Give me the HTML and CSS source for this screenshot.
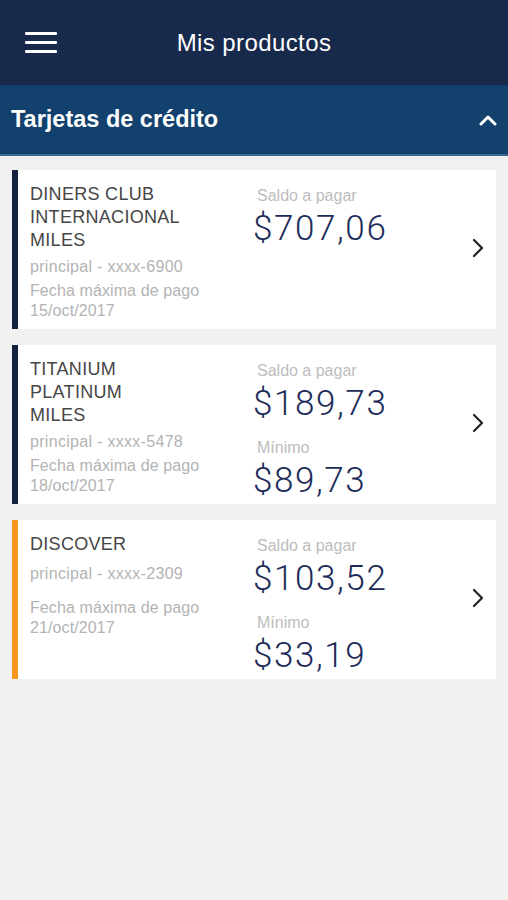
FILE: index.html
```html
<!DOCTYPE html>
<html lang="es">
<head>
  <meta charset="UTF-8" />
  <meta name="viewport" content="width=device-width, initial-scale=1.0">
  <title>Mis productos</title>
  <link rel="stylesheet" href="styles.css">
</head>
<body>
  <div class="top-bar">
    <div class="menu-btn">
      <span></span><span></span><span></span>
    </div>
    <h1>Mis productos</h1>
  </div>

  <div class="section-head">
    <h2>Tarjetas de crédito</h2>
    <svg class="chev-up" width="18" height="12" viewBox="0 0 18 12">
      <path d="M2 10 L9 3 L16 10" fill="none" stroke="#fff" stroke-width="3" stroke-linecap="round" stroke-linejoin="round"/>
    </svg>
  </div>

  <div class="card-list">
    <div class="card">
      <div class="card-info">
        <div class="card-name">DINERS CLUB<br>INTERNACIONAL<br>MILES</div>
        <div class="card-num">principal - xxxx-6900</div>
        <div class="card-date">Fecha máxima de pago<br>15/oct/2017</div>
      </div>
      <div class="card-amounts">
        <div class="label">Saldo a pagar</div>
        <div class="amount">$707,06</div>
      </div>
      <svg class="chev-right" width="14" height="20" viewBox="0 0 14 20">
        <path d="M3 2 L11 10 L3 18" fill="none" stroke="#222" stroke-width="2.2" stroke-linecap="round" stroke-linejoin="round"/>
      </svg>
    </div>

    <div class="card">
      <div class="card-info">
        <div class="card-name">TITANIUM<br>PLATINUM<br>MILES</div>
        <div class="card-num">principal - xxxx-5478</div>
        <div class="card-date">Fecha máxima de pago<br>18/oct/2017</div>
      </div>
      <div class="card-amounts">
        <div class="label">Saldo a pagar</div>
        <div class="amount">$189,73</div>
        <div class="label label-min">Mínimo</div>
        <div class="amount">$89,73</div>
      </div>
      <svg class="chev-right" width="14" height="20" viewBox="0 0 14 20">
        <path d="M3 2 L11 10 L3 18" fill="none" stroke="#222" stroke-width="2.2" stroke-linecap="round" stroke-linejoin="round"/>
      </svg>
    </div>

    <div class="card card-orange">
      <div class="card-info">
        <div class="card-name">DISCOVER</div>
        <div class="card-num spaced">principal - xxxx-2309</div>
        <div class="card-date spaced">Fecha máxima de pago<br>21/oct/2017</div>
      </div>
      <div class="card-amounts">
        <div class="label">Saldo a pagar</div>
        <div class="amount">$103,52</div>
        <div class="label label-min">Mínimo</div>
        <div class="amount">$33,19</div>
      </div>
      <svg class="chev-right" width="14" height="20" viewBox="0 0 14 20">
        <path d="M3 2 L11 10 L3 18" fill="none" stroke="#222" stroke-width="2.2" stroke-linecap="round" stroke-linejoin="round"/>
      </svg>
    </div>
  </div>
</body>
</html>
```

FILE: styles.css
```css
html, body {
  margin: 0;
  font-family: "Liberation Sans", Arial, sans-serif;
  background: #f1f1f1;
  color: #000000;
}
.top-bar {
  background-color: #182a4b;
  height: 85px;
  display: flex;
  align-items: center;
  justify-content: center;
  position: relative;
}
.top-bar h1 {
  color: #ffffff;
  font-size: 24px;
  font-weight: normal;
  letter-spacing: 0.4px;
  margin: 0;
}
.menu-btn {
  position: absolute;
  left: 25px;
  top: 32px;
  width: 32px;
  display: flex;
  flex-direction: column;
  gap: 6px;
}
.menu-btn span {
  display: block;
  height: 3px;
  background: #ffffff;
  border-radius: 1px;
}
.section-head {
  background-color: #13416d;
  height: 69px;
  border-bottom: 2px solid #3a6894;
  display: flex;
  align-items: center;
  justify-content: space-between;
  padding: 0 11px;
}
.section-head h2 {
  color: #ffffff;
  font-size: 23.5px;
  font-weight: bold;
  margin: 0;
}
.card-list {
  padding: 14px 12px;
  display: flex;
  flex-direction: column;
  gap: 16px;
}
.card {
  background: #ffffff;
  border-left: 6px solid #14203f;
  height: 159px;
  display: flex;
  align-items: flex-start;
  box-sizing: border-box;
}
.card-orange {
  border-left-color: #f7961e;
}
.card-info {
  width: 227px;
  padding: 13px 0 0 12px;
  box-sizing: border-box;
}
.card-name {
  font-size: 18px;
  line-height: 23px;
  letter-spacing: 0.3px;
  color: #464646;
}
.card-num {
  font-size: 16px;
  line-height: 20px;
  letter-spacing: 0.3px;
  color: #b3b3b3;
  margin-top: 5px;
}
.card-num.spaced {
  margin-top: 8px;
}
.card-date {
  font-size: 16px;
  line-height: 20px;
  letter-spacing: 0.1px;
  color: #b3b3b3;
  margin-top: 4px;
}
.card-date.spaced {
  margin-top: 14px;
}
.card-amounts {
  flex: 1;
  padding: 16px 0 0 12px;
}
.label {
  font-size: 16px;
  line-height: 20px;
  color: #bdbdbd;
}
.label-min {
  margin-top: 14px;
}
.amount {
  font-family: Roboto, "Liberation Sans", sans-serif;
  font-weight: 300;
  font-size: 35px;
  line-height: 40px;
  letter-spacing: 1.6px;
  color: #1d2b5a;
  margin: 3px 0 0 -4px;
}
.chev-right {
  align-self: center;
  margin: -4px 11px 0 0;
}
```
